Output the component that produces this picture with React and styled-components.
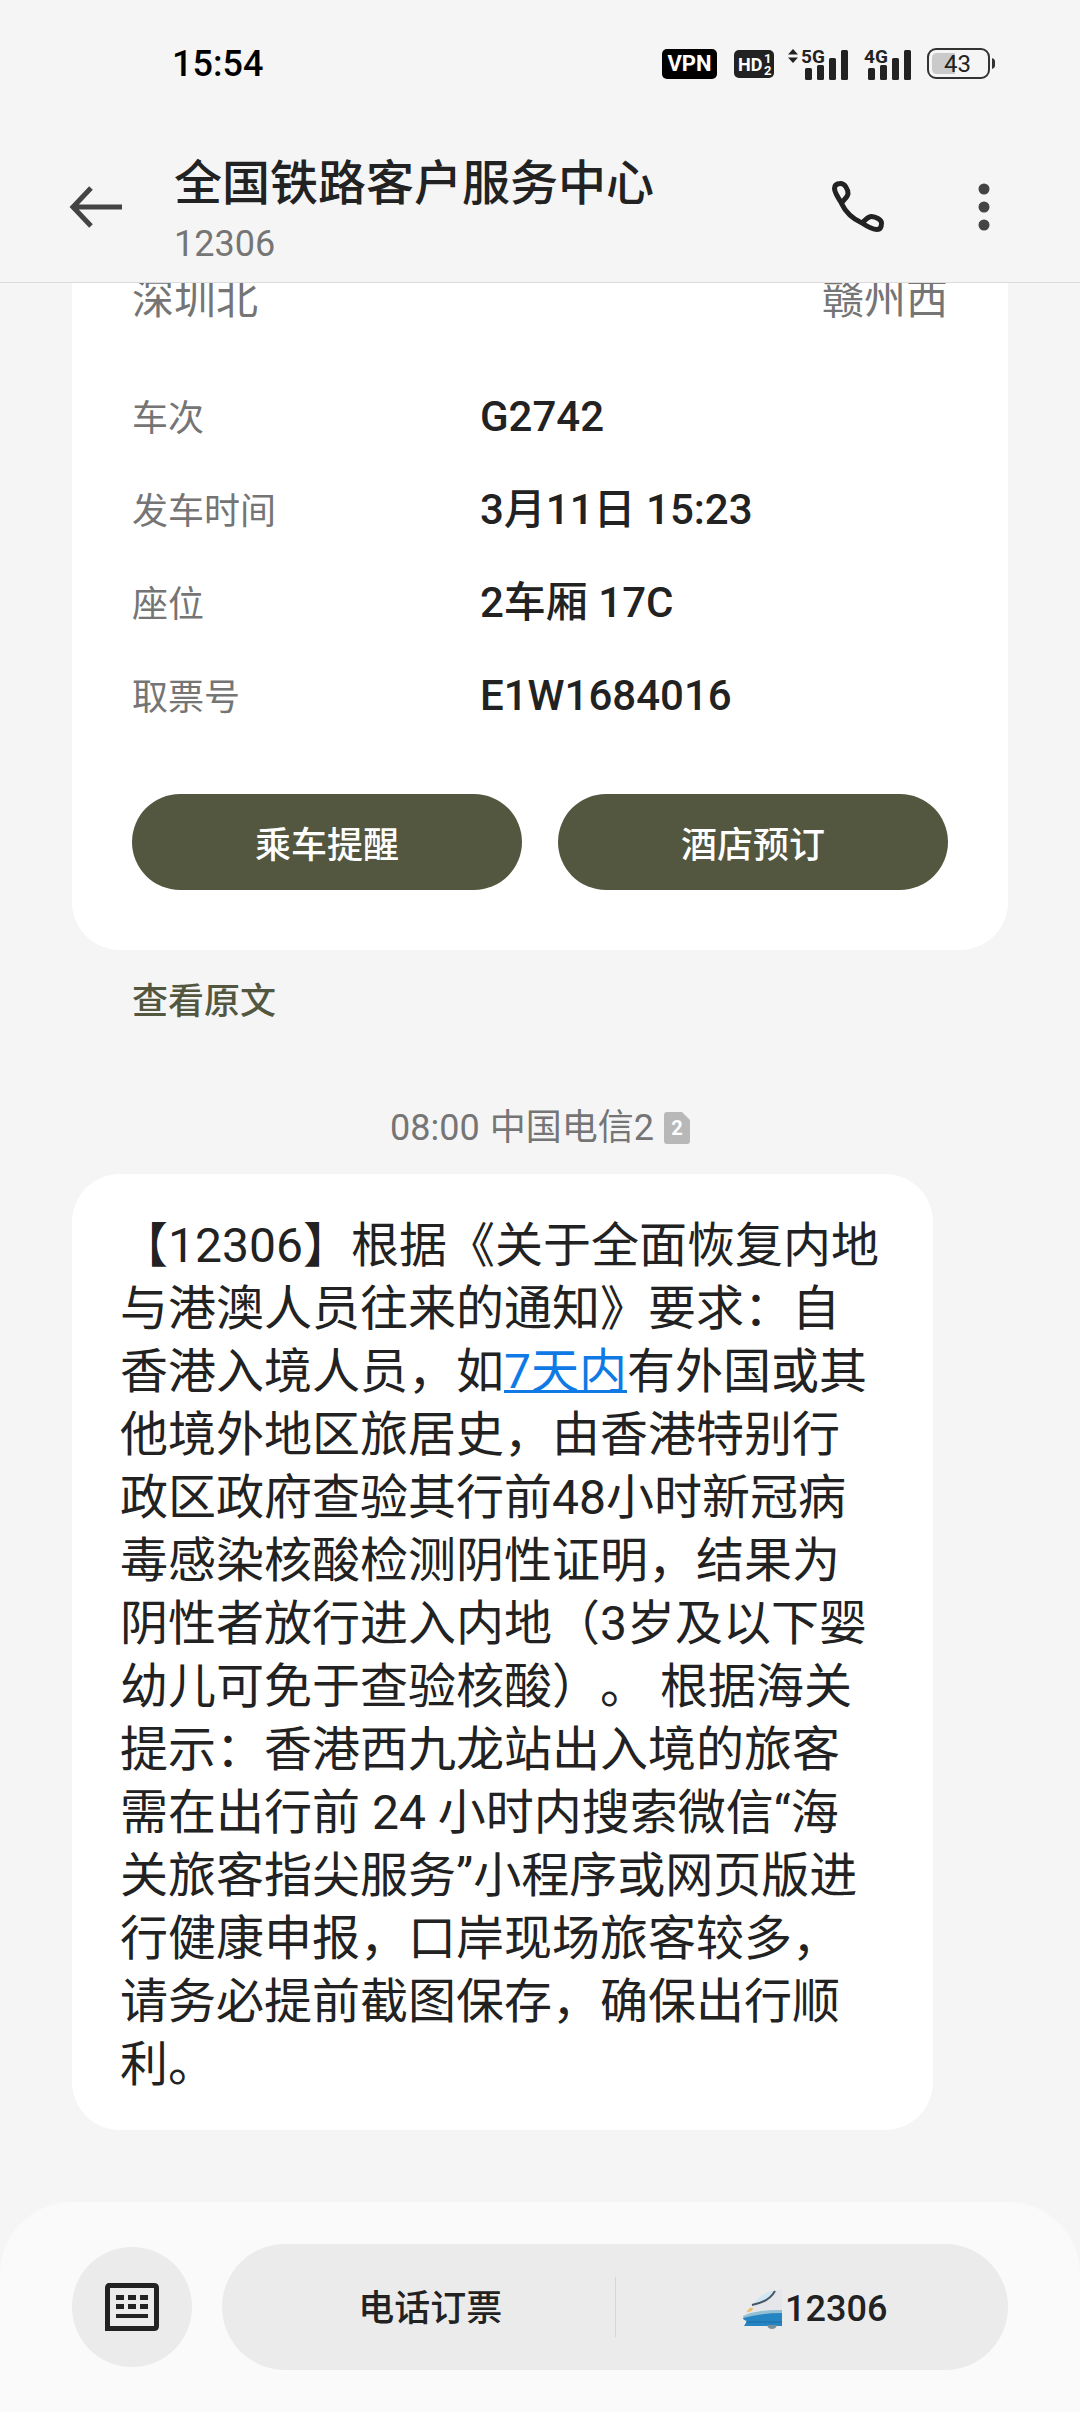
import styled, { createGlobalStyle } from "styled-components";

const ticketInfo = [
  { label: "车次", value: "G2742" },
  { label: "发车时间", value: "3月11日 15:23" },
  { label: "座位", value: "2车厢 17C" },
  { label: "取票号", value: "E1W1684016" },
];

function App() {
  return (
    <>
      <GlobalStyle />
      <StPage>
        <StHeader>
          <StatusBar />
          <StTitleBar>
            <StIconButton type="button" aria-label="返回">
              <BackIcon />
            </StIconButton>
            <StTitleBox>
              <StTitle>全国铁路客户服务中心</StTitle>
              <StNumber>12306</StNumber>
            </StTitleBox>
            <StIconButton type="button" aria-label="拨打电话">
              <PhoneIcon />
            </StIconButton>
            <StIconButton type="button" aria-label="更多">
              <MoreIcon />
            </StIconButton>
          </StTitleBar>
        </StHeader>
        <StMessages>
          <TicketCard />
          <StOriginLink href="#origin">查看原文</StOriginLink>
          <StTimeLine>
            <time>08:00</time>
            <span>中国电信2</span>
            <SimIcon />
          </StTimeLine>
          <StBubble>
            【12306】根据《关于全面恢复内地与港澳人员往来的通知》要求：自香港入境人员，如
            <StDateLink href="#date">7天内</StDateLink>
            有外国或其他境外地区旅居史，由香港特别行政区政府查验其行前48小时新冠病毒感染核酸检测阴性证明，结果为阴性者放行进入内地（3岁及以下婴幼儿可免于查验核酸）。
            {" 根据海关提示：香港西九龙站出入境的旅客需在出行前 24 小时内搜索微信“海关旅客指尖服务”小程序或网页版进行健康申报，口岸现场旅客较多，请务必提前截图保存，确保出行顺利。"}
          </StBubble>
        </StMessages>
        <BottomBar />
      </StPage>
    </>
  );
}

export default App;

function StatusBar() {
  return (
    <StStatusBar>
      <StClock>15:54</StClock>
      <StVpn>VPN</StVpn>
      <HdIcon />
      <SignalIcon label="5G" arrows />
      <SignalIcon label="4G" />
      <BatteryIcon />
    </StStatusBar>
  );
}

function TicketCard() {
  return (
    <StCard>
      <StRoute>
        <span>深圳北</span>
        <span>赣州西</span>
      </StRoute>
      <StInfoList>
        {ticketInfo.map(({ label, value }) => (
          <StInfoRow key={label}>
            <StLabel>{label}</StLabel>
            <StValue>{value}</StValue>
          </StInfoRow>
        ))}
      </StInfoList>
      <StCardButtons>
        <StCardButton type="button">乘车提醒</StCardButton>
        <StCardButton type="button">酒店预订</StCardButton>
      </StCardButtons>
    </StCard>
  );
}

function BottomBar() {
  return (
    <StBottomBar>
      <StKeyboardButton type="button" aria-label="键盘">
        <KeyboardIcon />
      </StKeyboardButton>
      <StMenu>
        <StMenuButton type="button" $indent={24}>
          电话订票
        </StMenuButton>
        <StDivider />
        <StMenuButton type="button" $indent={6}>
          <TrainIcon />
          12306
        </StMenuButton>
      </StMenu>
    </StBottomBar>
  );
}

/* icons */

function HdIcon() {
  return (
    <StHd width="40" height="28" viewBox="0 0 40 28">
      <rect width="40" height="28" rx="5" fill="#222" />
      <StIconText x="4" y="21" fontSize="18" fill="#fff">
        HD
      </StIconText>
      <StIconText x="30" y="13" fontSize="13" fill="#fff">
        1
      </StIconText>
      <StIconText x="30" y="25" fontSize="13" fill="#fff">
        2
      </StIconText>
    </StHd>
  );
}

function SignalIcon({ label, arrows }) {
  return (
    <StSignal width="62" height="34" viewBox="0 0 62 34" fill="#222">
      {arrows && <path d="M6 2 11 7.5H1zM6 16 1 10.500H11z" />}
      <StIconText x="14" y="16" fontSize="19">
        {label}
      </StIconText>
      <rect x="18" y="21" width="7" height="12" rx="1.500" />
      <rect x="30" y="18" width="7" height="15" rx="1.500" />
      <rect x="42" y="11" width="7" height="22" rx="1.500" />
      <rect x="54" y="3" width="7" height="30" rx="1.500" />
    </StSignal>
  );
}

function BatteryIcon() {
  return (
    <StBattery width="68" height="32" viewBox="0 0 68 32">
      <rect x="1" y="1" width="61" height="29" rx="8" fill="none" stroke="#333" strokeWidth="2" />
      <path d="M10 5H28V26H10Q5 26 5 21V10Q5 5 10 5z" fill="#cacaca" />
      <path d="M65 10q3 1 3 3v5q0 2-3 3z" fill="#333" />
      <text x="17" y="24" fontSize="24" fill="#222">
        43
      </text>
    </StBattery>
  );
}

function BackIcon() {
  return (
    <svg width="54" height="42" viewBox="0 0 54 42" fill="none" stroke="#444" strokeWidth="5">
      <path d="M22 2 4 21 22 40M4 21H53" />
    </svg>
  );
}

function PhoneIcon() {
  return (
    <svg width="54" height="54" viewBox="0 0 54 54" fill="none" stroke="#222" strokeWidth="5" strokeLinejoin="round">
      <path d="M10.500 23C6.500 17 3.500 11.500 3.500 8.500C3.500 5 6 3.500 9.500 3.500C14 3.500 17 9.500 17 13.500C17 17 13 19 10.500 23.500C14 31 21 38.500 31 43C37 47 42 49.500 46 49.500C49.500 49.500 50.500 46 50.500 43C50.500 40 45 36.500 40.500 36.500C36 36.500 34.500 41 30.500 43" />
    </svg>
  );
}

function MoreIcon() {
  return (
    <svg width="12" height="48" viewBox="0 0 12 48" fill="#444">
      <circle cx="6" cy="6" r="5.500" />
      <circle cx="6" cy="24" r="5.500" />
      <circle cx="6" cy="42" r="5.500" />
    </svg>
  );
}

function SimIcon() {
  return (
    <svg width="26" height="32" viewBox="0 0 26 32">
      <path d="M3 0H18L26 8V29Q26 32 23 32H3Q0 32 0 29V3Q0 0 3 0z" fill="#b8b8b8" />
      <text x="13" y="23" fontSize="20" fontWeight="700" textAnchor="middle" fill="#fff">
        2
      </text>
    </svg>
  );
}

function KeyboardIcon() {
  return (
    <svg width="54" height="48" viewBox="0 0 54 48" fill="#222">
      <path
        d="M2.500 2.500H49Q51.500 2.500 51.500 5V43Q51.500 45.500 49 45.500H2.500V5Q2.500 2.500 5 2.500z"
        fill="none"
        stroke="#222"
        strokeWidth="5"
      />
      <path d="M11 12h8v5h-8zM23 12h8v5h-8zM35 12h8v5h-8zM11 21h8v5h-8zM23 21h8v5h-8zM35 21h8v5h-8zM11 31h32v4H11z" />
    </svg>
  );
}

function TrainIcon() {
  return (
    <svg width="40" height="40" viewBox="0 0 40 40">
      <path d="M1 28Q9 15 20 6Q27 1 40 1V23L2 30z" fill="#e4e6e9" />
      <path d="M11 15Q21 3 33 2Q27 12 11 15z" fill="#cfe6f5" />
      <path d="M10 16Q27 13 33 2" fill="none" stroke="#465664" strokeWidth="2" />
      <path d="M5 22 8 19H11Q11 23 5 23z" fill="#f2bd6b" />
      <path d="M1 27Q18 20 40 21V25Q18 25 2 30z" fill="#93bfd2" />
      <path d="M1 29Q18 24 40 24V37H2L5 32Q1 31 1 29z" fill="#2585c2" />
      <path d="M4 33H40" stroke="#1b6ba3" strokeWidth="1" />
      <path d="M25 36H35Q34 40 30 40T25 36z" fill="#78909c" />
    </svg>
  );
}

const GlobalStyle = createGlobalStyle`
  * {
    box-sizing: border-box;
  }

  body {
    margin: 0;
    background-color: #f5f5f5;
    color: #222;
    font-family: Roboto, "Noto Sans CJK SC", sans-serif;
    text-spacing-trim: space-all;
    text-autospace: no-autospace;
  }

  button {
    border: none;
    padding: 0;
    background: none;
    color: inherit;
    font: inherit;
    cursor: pointer;
  }

  svg {
    display: block;
    flex-shrink: 0;
    overflow: visible;
  }
`;

const StPage = styled.div`
  display: flex;
  flex-direction: column;
  height: 100vh;
`;

const StHeader = styled.header`
  flex-shrink: 0;
  border-bottom: 1px solid #dcdcdc;
`;

const StStatusBar = styled.div`
  display: flex;
  align-items: center;
  height: 128px;
  padding: 0 85px 0 172px;
`;

const StClock = styled.time`
  margin-right: auto;
  color: #000;
  font-size: 36px;
  font-weight: 500;
`;

const StVpn = styled.span`
  width: 55px;
  border-radius: 5px;
  background-color: #000;
  color: #fff;
  font-size: 22px;
  font-weight: 700;
  line-height: 30px;
  text-align: center;
`;

const StHd = styled.svg`
  margin-left: 17px;
`;

const StSignal = styled.svg`
  margin-left: 13px;

  & + & {
    margin-left: 1px;
  }
`;

const StBattery = styled.svg`
  margin-left: 15px;
`;

const StIconText = styled.text`
  font-weight: 700;
`;

const StTitleBar = styled.div`
  display: flex;
  align-items: center;
  height: 154px;
  padding: 4px 90px 0 69px;
`;

const StIconButton = styled.button`
  & + & {
    margin-left: 93px;
  }
`;

const StTitleBox = styled.div`
  flex: 1;
  margin-left: 51px;
  padding-top: 8px;
`;

const StTitle = styled.h1`
  margin: 0;
  font-size: 48px;
  font-weight: 500;
  line-height: 66px;
`;

const StNumber = styled.p`
  margin: 0;
  color: #757575;
  font-size: 36px;
  line-height: 54px;
`;

/* newest message stays at the bottom, older ones run out under the header */
const StMessages = styled.main`
  display: flex;
  flex: 1;
  flex-direction: column;
  justify-content: flex-end;
  min-height: 0;
  padding: 0 72px 72px;
  overflow: hidden;
`;

const StCard = styled.section`
  flex-shrink: 0;
  padding: 60px;
  border-radius: 48px;
  background-color: #fff;
`;

const StRoute = styled.div`
  display: flex;
  justify-content: space-between;
  color: #757575;
  font-size: 42px;
  line-height: 60px;
`;

const StInfoList = styled.dl`
  margin: 40px 0 52px;
`;

const StInfoRow = styled.div`
  display: flex;
  align-items: baseline;
  height: 93px;
  line-height: 93px;
`;

const StLabel = styled.dt`
  width: 348px;
  color: #757575;
  font-size: 36px;
`;

const StValue = styled.dd`
  margin: 0;
  font-size: 42px;
  font-weight: 500;
`;

const StCardButtons = styled.div`
  display: flex;
  gap: 36px;
`;

const StCardButton = styled.button`
  flex: 1;
  height: 96px;
  border-radius: 48px;
  background-color: #53573f;
  color: #fff;
  font-size: 36px;
  font-weight: 500;
`;

const StOriginLink = styled.a`
  flex-shrink: 0;
  align-self: flex-start;
  margin: 25px 60px 0;
  color: #53573f;
  font-size: 36px;
  font-weight: 500;
  line-height: 54px;
  text-decoration: none;
`;

const StTimeLine = styled.div`
  display: flex;
  flex-shrink: 0;
  align-items: center;
  justify-content: center;
  gap: 10px;
  margin: 72px 0 19px;
  color: #757575;
  font-size: 36px;
  line-height: 54px;
`;

const StBubble = styled.p`
  flex-shrink: 0;
  margin: 0 75px 0 0;
  padding: 40px 50px 34px 48px;
  border-radius: 48px;
  background-color: #fff;
  font-size: 48px;
  line-height: 63px;
`;

const StDateLink = styled.a`
  color: #0f7ae5;
  text-decoration-thickness: 3px;
  text-decoration-skip-ink: none;
`;

const StBottomBar = styled.footer`
  display: flex;
  flex-shrink: 0;
  align-items: center;
  gap: 30px;
  padding: 42px 72px;
  border-radius: 72px 72px 0 0;
  background-color: #fafafa;
`;

const StKeyboardButton = styled.button`
  display: flex;
  align-items: center;
  justify-content: center;
  width: 120px;
  height: 120px;
  border-radius: 50%;
  background-color: #ebebeb;
`;

const StMenu = styled.div`
  display: flex;
  flex: 1;
  align-items: center;
  height: 126px;
  border-radius: 63px;
  background-color: #ebebeb;
`;

const StMenuButton = styled.button`
  display: flex;
  align-items: center;
  justify-content: center;
  gap: 3px;
  width: 50%;
  height: 100%;
  padding-top: 4px;
  padding-left: ${({ $indent }) => $indent}px;
  font-size: 36px;
  font-weight: 500;
  line-height: 54px;
`;

const StDivider = styled.span`
  flex-shrink: 0;
  width: 1px;
  height: 60px;
  background-color: #d6d6d6;
`;
